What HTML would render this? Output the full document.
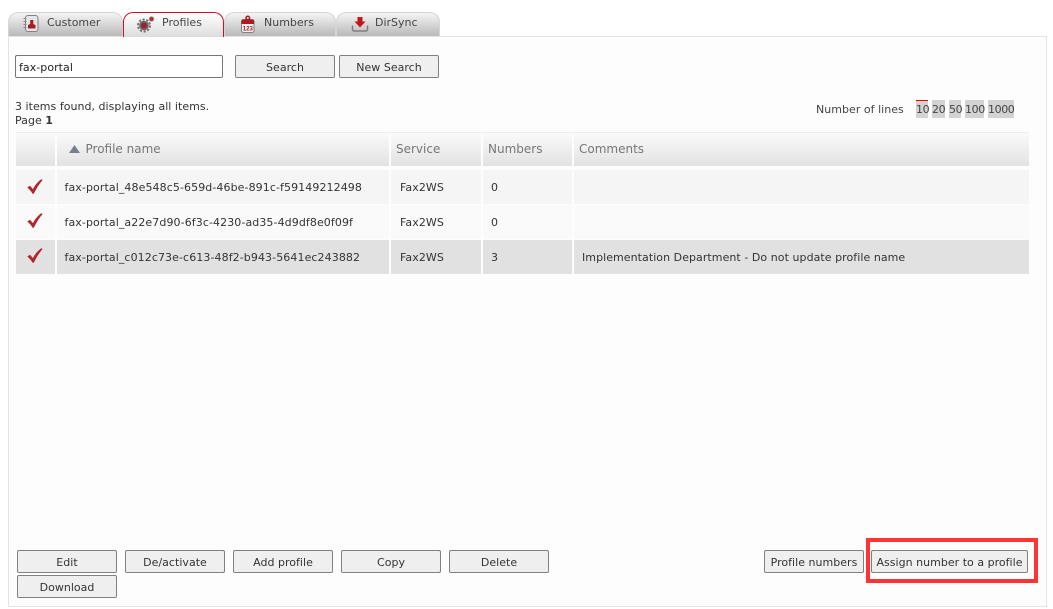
<!DOCTYPE html>
<html><head><meta charset="utf-8">
<style>
html,body{margin:0;padding:0;width:1053px;height:609px;overflow:hidden;background:#fff;font-family:"DejaVu Sans",sans-serif;font-size:11px;color:#333}
.a{position:absolute;white-space:nowrap}
.panel{position:absolute;left:8px;top:36px;width:1037px;height:569px;border:1px solid #e4e4e4;background:#fdfdfd}
.tab{position:absolute;top:12px;height:24px;box-sizing:border-box;border:1px solid #d4d4d4;border-bottom:none;border-radius:10px 10px 0 0;background:linear-gradient(#f4f4f4,#b9b9b9);line-height:19px;color:#444}
.tab.on{border:1px solid #c8102e;border-bottom:none;background:linear-gradient(#fff,#dcdcdc);height:25px;z-index:2}
.tab span{position:absolute;top:0;white-space:nowrap}
.tab svg{position:absolute}
.btn{position:absolute;height:23px;box-sizing:border-box;border:1px solid #808080;border-radius:2px;background:#efefef;text-align:center;line-height:24px;color:#333;white-space:nowrap;letter-spacing:.02px}
.input{position:absolute;left:15px;top:55px;width:208px;height:23px;box-sizing:border-box;border:1px solid #767676;border-radius:2px;background:#fff;line-height:24px;padding-left:3px;color:#222;letter-spacing:.05px}
.th{position:absolute;top:133px;height:33px;background:linear-gradient(#fafafa,#e2e2e2);font-size:12px;color:#777;line-height:33px}
.c{position:absolute;height:34px;line-height:35px;white-space:nowrap;color:#333;box-sizing:border-box;letter-spacing:.09px}
.pg{position:absolute;top:100px;height:18px;background:#d3d3d3;text-align:center;line-height:19px;color:#444;letter-spacing:-.4px}
</style></head><body>

<div class="panel"></div>

<div class="tab" style="left:8px;width:115px"><span style="left:38px">Customer</span>
<svg style="left:13px;top:1px" width="18" height="19" viewBox="0 0 18 19"><rect x="3.500" y="1.500" width="12.500" height="16" rx="2.500" fill="#e6e6e6" stroke="#808080"/><path d="M1.500 4.500h3M1.500 7.500h3M1.500 10.500h3M1.500 13.500h3" stroke="#8a8a8a"/><path d="M6 14.500v-3.500l2.200-1V6h3.100v4l2.200 1v3.500z" fill="#a81c22"/></svg></div>

<div class="tab on" style="left:123px;width:101px"><span style="left:38px">Profiles</span>
<svg style="left:13px;top:2px" width="20" height="18" viewBox="0 0 20 18"><circle cx="7" cy="10.500" r="6" fill="none" stroke="#707070" stroke-width="2" stroke-dasharray="2.200 1.600"/><circle cx="7" cy="10.500" r="4.800" fill="#666"/><circle cx="7" cy="10.500" r="2.800" fill="#a81c22"/><circle cx="14.500" cy="4" r="2.300" fill="#c3242a" stroke="#999" stroke-width=".8"/></svg></div>

<div class="tab" style="left:224px;width:112px"><span style="left:39px">Numbers</span>
<svg style="left:14px;top:1px" width="18" height="20" viewBox="0 0 18 20"><rect x="2.500" y="5.500" width="12.500" height="13" rx="2" fill="#eee" stroke="#808080"/><path d="M2.500 10V7.500q0-2 2-2h8.500q2 0 2 2V10z" fill="#a81c22"/><circle cx="8.800" cy="4" r="1.800" fill="none" stroke="#a81c22" stroke-width="1.500"/><text x="8.800" y="16.500" font-size="6" font-family="Liberation Sans" font-weight="bold" text-anchor="middle" fill="#a81c22">123</text></svg></div>

<div class="tab" style="left:336px;width:104px"><span style="left:38px">DirSync</span>
<svg style="left:14px;top:2px" width="18" height="18" viewBox="0 0 18 18"><path d="M1.500 10.500v3.500q0 2 2 2h11q2 0 2-2v-3.500" fill="none" stroke="#808080" stroke-width="1.500"/><path d="M6.500 2h5v4.500h3l-5.500 6-5.500-6h3z" fill="#c3161c"/></svg></div>

<div class="input">fax-portal</div>
<div class="btn" style="left:235px;top:55px;width:100px">Search</div>
<div class="btn" style="left:339px;top:55px;width:100px">New Search</div>

<div class="a" style="left:15px;top:100px;line-height:14px;color:#333;letter-spacing:.03px">3 items found, displaying all items.<br>Page <b>1</b></div>

<div class="a" style="left:816px;top:103px;color:#444;letter-spacing:.03px">Number of lines</div>
<div class="pg" style="left:916px;width:12px;border-top:1px solid #f00;height:17px;line-height:18px">10</div>
<div class="pg" style="left:932px;width:13px">20</div>
<div class="pg" style="left:949px;width:12px">50</div>
<div class="pg" style="left:965px;width:19px">100</div>
<div class="pg" style="left:988px;width:26px">1000</div>

<div class="a" style="left:16px;top:132px;width:1013px;height:1px;background:#eee"></div>
<div class="th" style="left:16px;width:39px"></div>
<div class="th" style="left:57px;width:332px"><svg style="position:absolute;left:12px;top:12px" width="11" height="8"><path d="M5.500 0L11 8H0z" fill="#777f8a"/></svg><span style="position:absolute;left:28.500px">Profile name</span></div>
<div class="th" style="left:391px;width:90px;padding-left:0"><span style="position:absolute;left:5px">Service</span></div>
<div class="th" style="left:483px;width:89px"><span style="position:absolute;left:5px">Numbers</span></div>
<div class="th" style="left:574px;width:455px"><span style="position:absolute;left:5px">Comments</span></div>

<!-- row 1 -->
<div class="c" style="left:16px;top:170px;width:39px;background:#f5f5f5"><svg style="position:absolute;left:11px;top:9px" width="16" height="15" viewBox="0 0 16 15"><path d="M0.300 8.500L3 6.700l2.900 3.400C7.900 6 10.900 2.700 14.200 0.200l1.400 .8C12.300 4.800 9.300 9.500 6.800 14.800H5.600C4.200 12.300 2.400 10.200 .3 8.500z" fill="#b0252e"/></svg></div>
<div class="c" style="left:57px;top:170px;width:332px;background:#f5f5f5;padding-left:7.500px">fax-portal_48e548c5-659d-46be-891c-f59149212498</div>
<div class="c" style="left:391px;top:170px;width:90px;background:#f5f5f5;padding-left:9px">Fax2WS</div>
<div class="c" style="left:483px;top:170px;width:89px;background:#f5f5f5;padding-left:8px">0</div>
<div class="c" style="left:574px;top:170px;width:455px;background:#f5f5f5"></div>

<!-- row 2 -->
<div class="c" style="left:16px;top:205px;width:39px;background:#fafafa"><svg style="position:absolute;left:11px;top:8px" width="16" height="15" viewBox="0 0 16 15"><path d="M0.300 8.500L3 6.700l2.900 3.400C7.900 6 10.900 2.700 14.200 0.200l1.400 .8C12.300 4.800 9.300 9.500 6.800 14.800H5.600C4.200 12.300 2.400 10.200 .3 8.500z" fill="#b0252e"/></svg></div>
<div class="c" style="left:57px;top:205px;width:332px;background:#fafafa;padding-left:7.500px">fax-portal_a22e7d90-6f3c-4230-ad35-4d9df8e0f09f</div>
<div class="c" style="left:391px;top:205px;width:90px;background:#fafafa;padding-left:9px">Fax2WS</div>
<div class="c" style="left:483px;top:205px;width:89px;background:#fafafa;padding-left:8px">0</div>
<div class="c" style="left:574px;top:205px;width:455px;background:#fafafa"></div>

<!-- row 3 -->
<div class="c" style="left:16px;top:240px;width:39px;background:#e1e1e1"><svg style="position:absolute;left:11px;top:8px" width="16" height="15" viewBox="0 0 16 15"><path d="M0.300 8.500L3 6.700l2.900 3.400C7.900 6 10.900 2.700 14.200 0.200l1.400 .8C12.300 4.800 9.300 9.500 6.800 14.800H5.600C4.200 12.300 2.400 10.200 .3 8.500z" fill="#b0252e"/></svg></div>
<div class="c" style="left:57px;top:240px;width:332px;background:#e1e1e1;padding-left:7.500px">fax-portal_c012c73e-c613-48f2-b943-5641ec243882</div>
<div class="c" style="left:391px;top:240px;width:90px;background:#e1e1e1;padding-left:9px">Fax2WS</div>
<div class="c" style="left:483px;top:240px;width:89px;background:#e1e1e1;padding-left:8px">3</div>
<div class="c" style="left:574px;top:240px;width:455px;background:#e1e1e1;padding-left:8px;letter-spacing:.055px">Implementation Department - Do not update profile name</div>

<div class="btn" style="left:17px;top:550px;width:100px">Edit</div>
<div class="btn" style="left:125px;top:550px;width:100px">De/activate</div>
<div class="btn" style="left:233px;top:550px;width:100px">Add profile</div>
<div class="btn" style="left:341px;top:550px;width:100px">Copy</div>
<div class="btn" style="left:449px;top:550px;width:100px">Delete</div>
<div class="btn" style="left:17px;top:575px;width:100px">Download</div>
<div class="btn" style="left:764px;top:550px;width:100px">Profile numbers</div>
<div class="btn" style="left:871px;top:550px;width:157px">Assign number to a profile</div>
<div class="a" style="left:866px;top:538px;width:164px;height:37px;border:4px solid #ff3333"></div>

</body></html>
